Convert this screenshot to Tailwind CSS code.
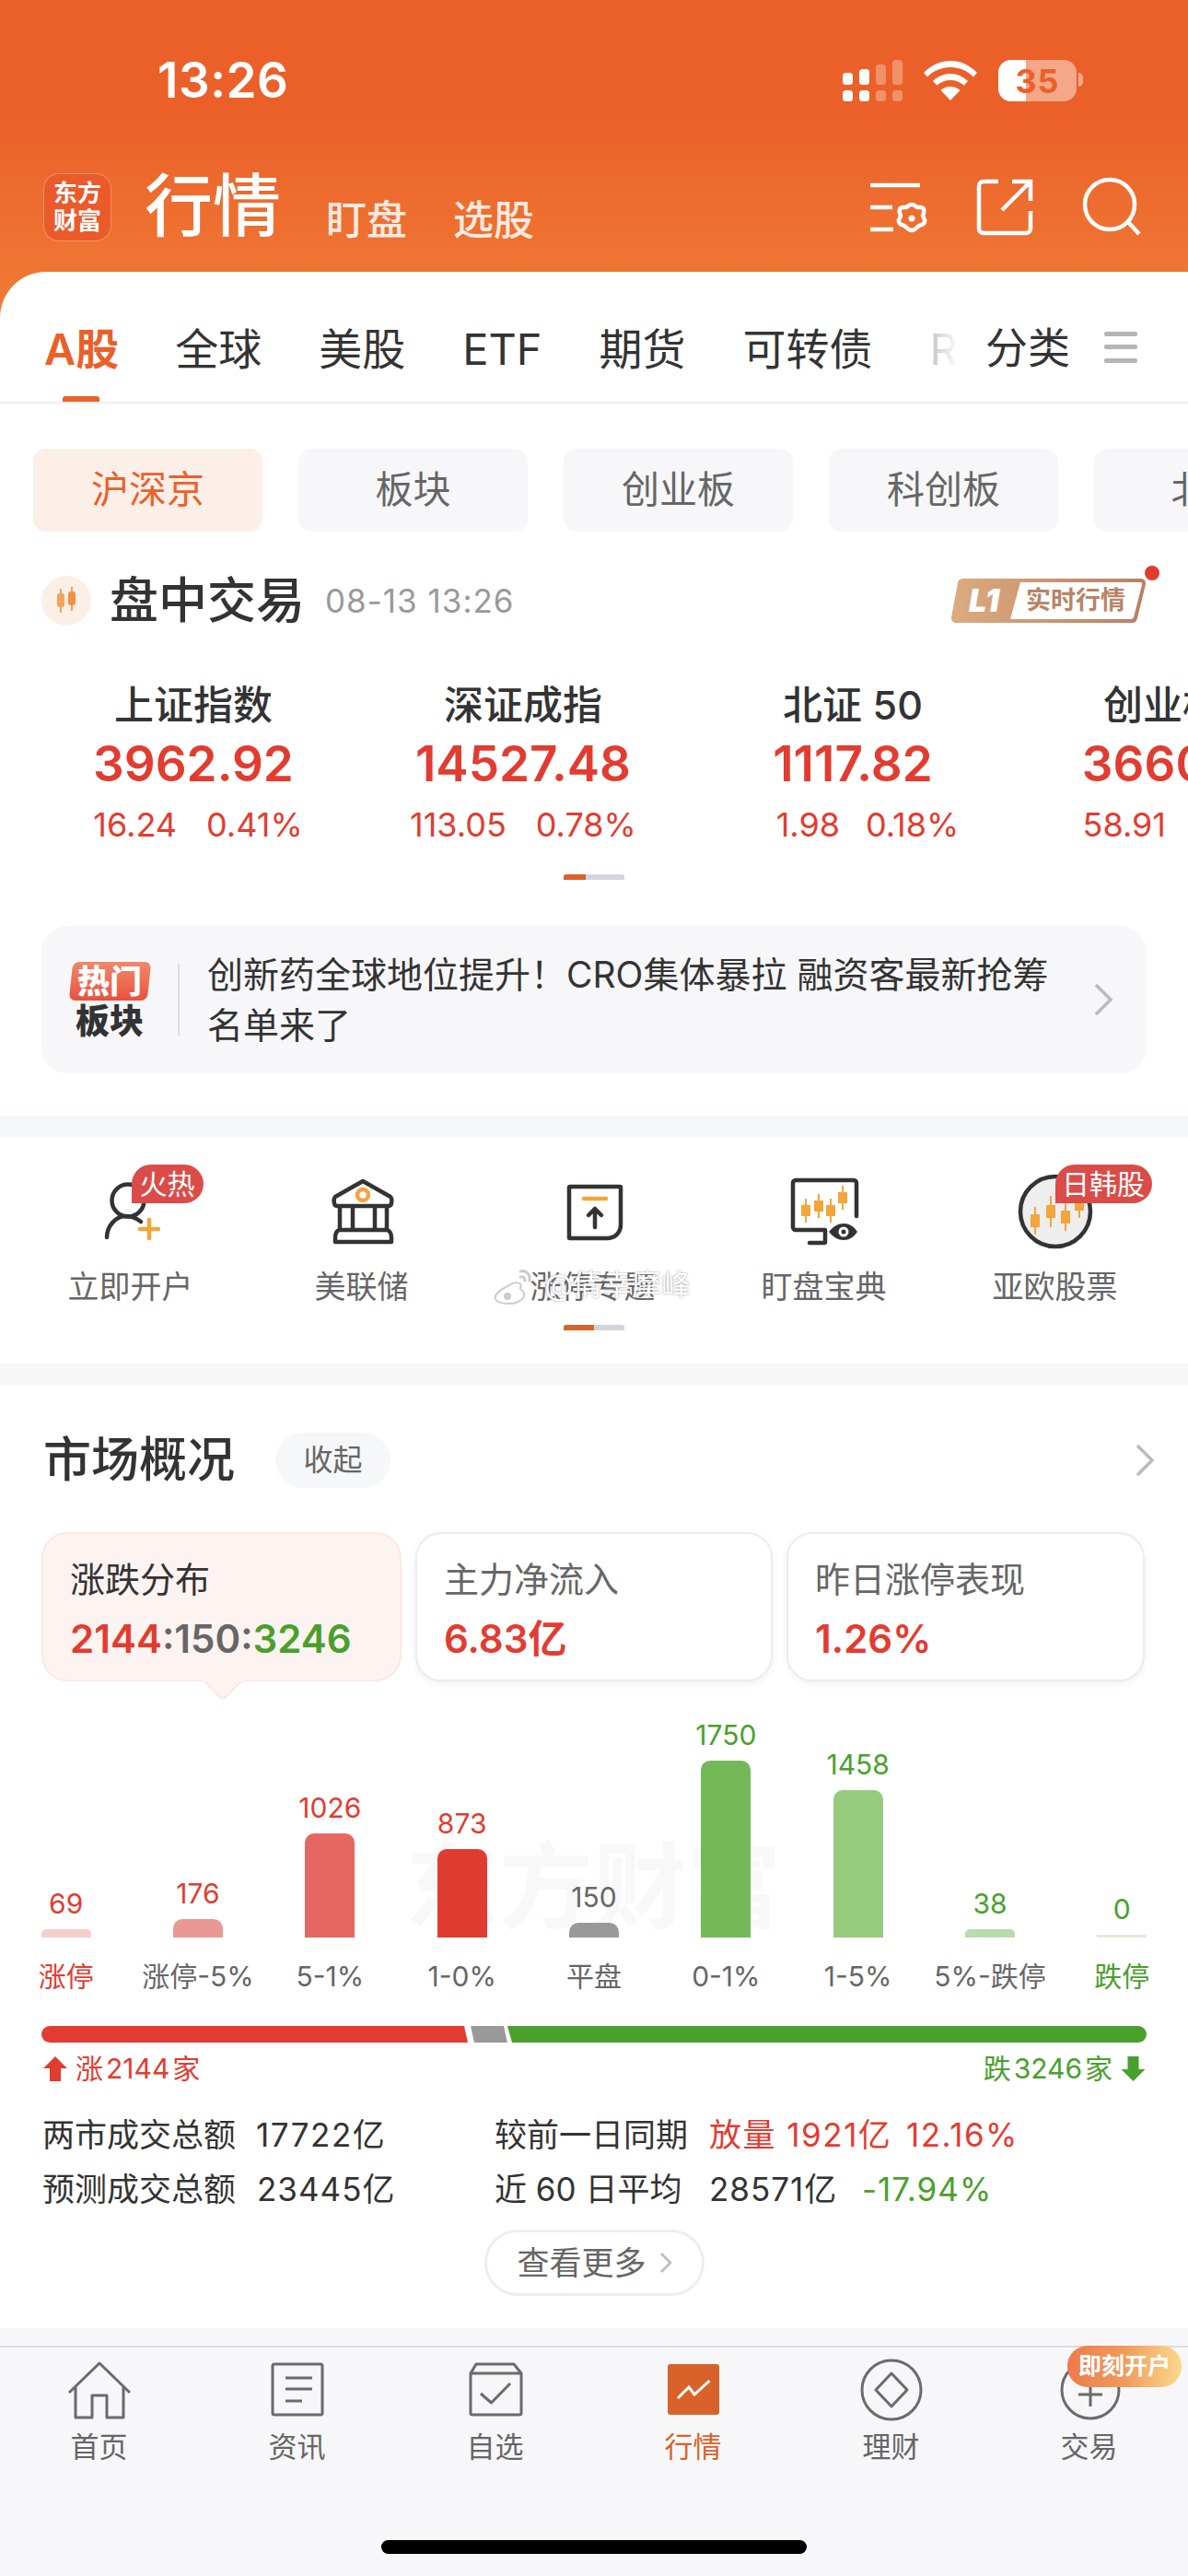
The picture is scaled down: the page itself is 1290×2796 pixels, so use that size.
<!DOCTYPE html>
<html lang="zh">
<head>
<meta charset="utf-8">
<title>行情</title>
<script src="https://cdn.jsdelivr.net/npm/@tailwindcss/browser@4"></script>
</head>
<body>
<div class="w-[1290px] h-[2796px] overflow-hidden flex flex-col bg-[#f6f7f9] text-[#333] font-['Inter','Noto_Sans_CJK_SC',sans-serif]">

  <!-- orange header -->
  <div class="h-[350px] shrink-0 bg-linear-to-b from-[#eb6029] from-[35%] to-[#f07c36] text-white">
    <div class="h-[175px] flex items-center relative">
      <span class="ml-[171px] text-[53px] font-semibold leading-none tracking-[0.5px]">13:26</span>
      <div class="ml-auto mr-[121px] flex items-center gap-[23px]">
        <svg width="65" height="45" viewBox="0 0 65 45" fill="#fff">
          <rect x="0" y="14" width="11" height="13" rx="3.500"/><rect x="18" y="10" width="11" height="17" rx="3.500"/>
          <rect x="36" y="5" width="11" height="22" rx="3.500" opacity=".3"/><rect x="54" y="0" width="11" height="27" rx="3.500" opacity=".3"/>
          <rect x="0" y="33" width="11" height="12" rx="3.500"/><rect x="18" y="33" width="11" height="12" rx="3.500"/>
          <rect x="36" y="33" width="11" height="12" rx="3.500" opacity=".3"/><rect x="54" y="33" width="11" height="12" rx="3.500" opacity=".3"/>
        </svg>
        <svg width="58" height="43" viewBox="0 0 58 43" fill="#fff">
          <path d="M29 0C18 0 8 4.500 0 13l4 4.500C11 10.500 19.500 7 29 7s18 3.500 25 10.500l4-4.500C50 4.500 40 0 29 0z"/>
          <path d="M29 14c-7 0-13.500 2.800-19 8l4.300 4.800C18.500 23 23.500 21 29 21s10.500 2 14.700 5.800L48 22c-5.500-5.200-12-8-19-8z"/>
          <path d="M29 28c-4 0-7.500 1.400-10.500 4L29 43l10.500-11c-3-2.600-6.500-4-10.500-4z"/>
        </svg>
        <div class="relative w-[85px] h-[45px] rounded-[14px] overflow-hidden flex bg-white/45">
          <div class="w-[30px] bg-white"></div>
          <span class="absolute inset-0 flex items-center justify-center text-[36px] leading-none font-bold text-[#eb6029] tracking-[1px]">35</span>
        </div>
      </div>
      <div class="absolute left-[1171px] top-[79px] w-[5px] h-[15px] rounded-r-full bg-white/45"></div>
    </div>
    <div class="flex items-start h-[120px]">
      <div class="ml-[48px] mt-[14px] w-[72px] h-[72px] rounded-[16px] bg-[#eb5a2a] shadow-[0_0_0_1px_rgba(255,255,255,0.25)] flex flex-col items-center justify-center text-[26px] leading-[30px] font-bold">
        <span>东方</span><span>财富</span>
      </div>
      <span class="ml-[37px] mt-[11px] text-[74px] leading-[74px] font-medium">行情</span>
      <span class="ml-[49px] mt-[42px] text-[44px] leading-[44px] font-medium text-white/85">盯盘</span>
      <span class="ml-[50px] mt-[42px] text-[44px] leading-[44px] font-medium text-white/85">选股</span>
      <svg class="ml-auto mr-[45px] mt-[15px]" width="300" height="70" viewBox="945 190 300 70" fill="none" stroke="#fff" stroke-width="4.500">
        <path d="M945 201h54M945 225h24M945 249h25"/>
        <path d="M990 222c3 0 4 2 6 3 3 0 6-1 7 2s0 5-1 7c0 2 3 4 2 7s-4 3-6 4c-2 1-4 5-8 5s-6-4-8-5c-2-1-5-1-6-4s2-5 2-7c-1-2-2-4-1-7s4-2 7-2c2-1 3-3 6-3z"/>
        <circle cx="990" cy="237" r="3.500" fill="#fff" stroke="none"/>
        <path d="M1084 197h-16a5 5 0 0 0-5 5v46a5 5 0 0 0 5 5h46a5 5 0 0 0 5-5v-19"/>
        <path d="M1088 228l31-31M1099 197h20v21"/>
        <circle cx="1205" cy="222" r="27"/>
        <path d="M1225 241l12 13"/>
      </svg>
    </div>
  </div>

  <!-- white card with market tabs -->
  <div class="-mt-[55px] relative bg-white rounded-t-[50px] pb-[46px]">
    <div class="relative h-[143px] border-b-2 border-[#eeeeee] overflow-hidden">
      <div class="flex items-center gap-[62px] pl-[48px] h-[166px] text-[47px] leading-none whitespace-nowrap">
        <span class="text-[#eb6029] font-semibold -mr-[1px]">A股</span>
        <span>全球</span><span>美股</span><span>ETF</span><span>期货</span><span>可转债</span><span class="text-[#ccc]">REITs</span>
      </div>
      <div class="absolute left-[68px] bottom-0 w-[40px] h-[6px] rounded-t-[3px] bg-[#eb6029]"></div>
      <div class="absolute right-0 top-0 h-full w-[276px] flex items-center pt-[22px] bg-linear-to-r from-white/0 from-[0%] via-white via-[10%] to-white">
        <span class="ml-[56px] text-[46px] leading-none">分类</span>
        <svg class="ml-[37px]" width="36" height="36" viewBox="0 0 36 36" fill="#b5b5b5"><rect y="1" width="36" height="5" rx="2"/><rect y="15" width="36" height="5" rx="2"/><rect y="30" width="36" height="5" rx="2"/></svg>
      </div>
    </div>

    <div class="flex gap-[39px] pl-[36px] pt-[49px] whitespace-nowrap">
      <div class="w-[249px] h-[90px] shrink-0 rounded-[14px] bg-[#fbefe8] text-[#eb6029] text-[41px] flex items-center justify-center">沪深京</div>
      <div class="w-[249px] h-[90px] shrink-0 rounded-[14px] bg-[#f7f7f9] text-[#666] text-[41px] flex items-center justify-center">板块</div>
      <div class="w-[249px] h-[90px] shrink-0 rounded-[14px] bg-[#f7f7f9] text-[#666] text-[41px] flex items-center justify-center">创业板</div>
      <div class="w-[249px] h-[90px] shrink-0 rounded-[14px] bg-[#f7f7f9] text-[#666] text-[41px] flex items-center justify-center">科创板</div>
      <div class="w-[249px] h-[90px] shrink-0 rounded-[14px] bg-[#f7f7f9] text-[#666] text-[41px] flex items-center justify-center">北证</div>
    </div>

    <div class="flex items-center pl-[45px] pr-[45px] mt-[48px] h-[54px]">
      <svg width="54" height="54" viewBox="0 0 54 54">
        <circle cx="27" cy="27" r="27" fill="#fcefe6"/>
        <path d="M21 14v26M33 12v26" stroke="#f3a35c" stroke-width="2"/>
        <rect x="17" y="19" width="8" height="15" rx="3" fill="#f3a35c"/><rect x="29" y="17" width="8" height="15" rx="3" fill="#ef9245"/>
      </svg>
      <span class="ml-[20px] text-[53px] leading-none font-medium">盘中交易</span>
      <span class="ml-[22px] text-[35px] leading-none tracking-[1px] text-[#999]">08-13 13:26</span>
      <div class="ml-auto relative w-[213px] h-[48px]">
        <svg class="absolute inset-0" width="213" height="48" viewBox="0 0 213 48">
          <defs><linearGradient id="lg" x1="0" x2="1"><stop offset="0" stop-color="#dcab7f"/><stop offset="1" stop-color="#b87f66"/></linearGradient></defs>
          <path d="M13 0H207a5 5 0 0 1 5 6l-9 37a6 6 0 0 1-6 5H6a5 5 0 0 1-5-6L8 5a6 6 0 0 1 5-5z" fill="url(#lg)"/>
          <path d="M76 4H206a2 2 0 0 1 2 3l-9 35a3 3 0 0 1-3 2H65z" fill="#fff"/>
        </svg>
        <span class="absolute left-[20px] top-[4px] text-[34px] leading-[40px] font-black italic text-white">L1</span>
        <span class="absolute left-[82px] top-[8px] text-[27px] leading-[32px] font-bold text-[#b88368] whitespace-nowrap">实时行情</span>
        <div class="absolute -top-[14px] -right-[14px] w-[16px] h-[16px] rounded-full bg-[#e23c31]"></div>
      </div>
    </div>

    <div class="flex pl-[31px] pt-[61px] overflow-hidden whitespace-nowrap text-center">
      <div class="w-[358px] shrink-0 flex flex-col items-center">
        <span class="text-[43px] leading-[50px] font-medium">上证指数</span>
        <span class="mt-[7px] text-[53px] leading-[64px] font-semibold text-[#e23c31]">3962.92</span>
        <div class="mt-[12px] ml-[10px] flex gap-[32px] text-[36px] leading-[44px] text-[#e23c31]"><span>16.24</span><span>0.41%</span></div>
      </div>
      <div class="w-[358px] shrink-0 flex flex-col items-center">
        <span class="text-[43px] leading-[50px] font-medium">深证成指</span>
        <span class="mt-[7px] text-[53px] leading-[64px] font-semibold text-[#e23c31]">14527.48</span>
        <div class="mt-[12px] flex gap-[32px] text-[36px] leading-[44px] text-[#e23c31]"><span>113.05</span><span>0.78%</span></div>
      </div>
      <div class="w-[358px] shrink-0 flex flex-col items-center">
        <span class="text-[43px] leading-[50px] font-medium">北证 50</span>
        <span class="mt-[7px] text-[53px] leading-[64px] font-semibold text-[#e23c31]">1117.82</span>
        <div class="mt-[12px] ml-[32px] flex gap-[28px] text-[36px] leading-[44px] text-[#e23c31]"><span>1.98</span><span>0.18%</span></div>
      </div>
      <div class="w-[358px] shrink-0 flex flex-col items-center">
        <span class="text-[43px] leading-[50px] font-medium">创业板指</span>
        <span class="mt-[7px] text-[53px] leading-[64px] font-semibold text-[#e23c31]">3660.92</span>
        <div class="mt-[12px] ml-[10px] flex gap-[32px] text-[36px] leading-[44px] text-[#e23c31]"><span>58.91</span><span>1.60%</span></div>
      </div>
    </div>
    <div class="mt-[32px] mx-auto w-[66px] h-[6px] rounded-t-[3px] bg-[#d1d5db] overflow-hidden"><div class="w-[24px] h-full bg-[#d9622a]"></div></div>

    <div class="mt-[50px] mx-[45px] h-[160px] rounded-[28px] bg-[#f7f7fa] flex items-center">
      <div class="ml-[31px] w-[86px] flex flex-col items-center">
        <div class="w-[85px] h-[42px] rounded-[7px] -skew-x-6 bg-linear-to-b from-[#f0886a] to-[#e9503f] flex items-center justify-center">
          <span class="skew-x-6 text-white text-[35px] leading-none font-black">热门</span>
        </div>
        <span class="mt-[5px] text-[37px] leading-[36px] font-black text-[#333] whitespace-nowrap">板块</span>
      </div>
      <div class="ml-[31px] w-[2px] h-[78px] bg-[#dddddd]"></div>
      <div class="ml-[30px] text-[39px] leading-[55px] whitespace-nowrap">创新药全球地位提升！CRO集体暴拉 融资客最新抢筹<br>名单来了</div>
      <svg class="ml-auto mr-[36px]" width="22" height="38" viewBox="0 0 22 38" fill="none" stroke="#bbb" stroke-width="3.500"><path d="M3 3l16 16L3 35"/></svg>
    </div>
  </div>

  <!-- shortcuts -->
  <div class="mt-[23px] h-[246px] bg-white">
    <div class="grid grid-cols-5 w-[1255px] ml-[16px] pt-[36px] text-center text-[34px] leading-[44px] text-[#666] whitespace-nowrap">
      <div class="flex flex-col items-center">
        <div class="relative w-[90px] h-[90px]">
          <svg width="90" height="90" viewBox="0 0 90 90" fill="none" stroke="#333" stroke-width="4.500" stroke-linecap="round">
            <circle cx="42" cy="33" r="17.500"/><path d="M19 73c0-12 10-24 22-23 6 0 11 3 15 6"/>
            <path d="M55 64h20M65 54v20" stroke="#f3a53c"/>
          </svg>
          <div class="absolute left-[46px] -top-[6px] w-[78px] h-[42px] rounded-r-full rounded-tl-full bg-[#db4c48] text-white text-[30px] leading-[42px]">火热</div>
        </div>
        <span class="mt-[15px]">立即开户</span>
      </div>
      <div class="flex flex-col items-center">
        <svg width="90" height="90" viewBox="0 0 90 90" fill="none" stroke="#333" stroke-width="4.500" stroke-linejoin="round">
          <path d="M46 12L16 29c-2 2-2 10 2 10h56c4 0 4-8 2-10z"/>
          <path d="M21 40v25M35 40v25M59 40v25M72 40v25"/>
          <path d="M21 65h50c4 0 6 4 6 8v5H16v-5c0-4 2-8 5-8z"/>
          <circle cx="46" cy="27" r="6" stroke="#f3a53c"/>
        </svg>
        <span class="mt-[15px]">美联储</span>
      </div>
      <div class="flex flex-col items-center relative">
        <svg width="90" height="90" viewBox="0 0 90 90" fill="none" stroke="#333" stroke-width="4.500" stroke-linejoin="round" stroke-linecap="round">
          <path d="M20 18h54a1 1 0 0 1 1 1v40c0 9-6 15-15 15H20a1 1 0 0 1-1-1V19a1 1 0 0 1 1-1z"/>
          <path d="M35 31h24" stroke="#f3a53c"/>
          <path d="M47 62V42M40 49l7-7 7 7"/>
        </svg>
        <span class="mt-[15px]">涨停专题</span>
        <div class="absolute left-[17px] top-[103px] flex items-center text-white text-[32px] leading-[44px] [text-shadow:0_0_2px_#888]">
          <svg width="44" height="42" viewBox="0 0 44 42"><path d="M30 6c6-2 11 3 10 10M30 12c3-1 5 1 5 4" fill="none" stroke="#ccc" stroke-width="3" stroke-linecap="round"/><path d="M30 24c4-8-8-6-12-3C10 25 1 30 3 36c2 5 10 5 15 5 10 0 18-6 16-12-1-3-6-4-4-5z" fill="#fff" stroke="#ccc" stroke-width="2"/><circle cx="16" cy="33" r="4" fill="#ccc"/></svg>
          <span class="ml-[12px]">@倩幸摩峰</span>
        </div>
      </div>
      <div class="flex flex-col items-center">
        <svg width="90" height="90" viewBox="0 0 90 90" fill="none">
          <path d="M80 50V14a3 3 0 0 0-3-3H14a3 3 0 0 0-3 3v48a3 3 0 0 0 3 3h32v13a1 1 0 0 1-1 1H29" stroke="#333" stroke-width="4.500" stroke-linejoin="round" stroke-linecap="round"/>
          <g fill="#f3a53c"><path d="M24 31h2v7h4v12h-4v7h-2v-7h-4V38h4z"/><path d="M38 26h2v7h4v12h-4v7h-2v-7h-4V33h4z"/><path d="M51 31h2v7h4v12h-4v7h-2v-7h-4V38h4z"/><path d="M64 17h2v7h4v12h-4v7h-2v-7h-4V24h4z"/></g>
          <path d="M50 67c5-6 10-9 16-9s11 3 15 9c-4 6-9 9-15 9s-11-3-16-9z" fill="#333"/>
          <circle cx="66" cy="67" r="5.500" fill="#fff"/><circle cx="66" cy="67" r="2.500" fill="#333"/>
        </svg>
        <span class="mt-[15px]">盯盘宝典</span>
      </div>
      <div class="flex flex-col items-center">
        <div class="relative w-[90px] h-[90px]">
          <svg width="90" height="90" viewBox="0 0 90 90" fill="none">
            <circle cx="45" cy="45" r="38" fill="#eeeeee" stroke="#333" stroke-width="4.500"/>
            <g fill="#f3a53c"><path d="M22 40h2v8h4v14h-4v8h-2v-8h-4V48h4z"/><path d="M39 28h2v10h4v14h-4v10h-2V52h-4V38h4z"/><path d="M55 34h2v10h4v14h-4v8h-2v-8h-4V44h4z"/><path d="M70 22h2v8h4v14h-4v8h-2v-8h-4V30h4z"/></g>
          </svg>
          <div class="absolute left-[45px] -top-[6px] w-[105px] h-[42px] rounded-r-full rounded-tl-full bg-[#db4c48] text-white text-[30px] leading-[42px]">日韩股</div>
        </div>
        <span class="mt-[15px]">亚欧股票</span>
      </div>
    </div>
    <div class="mt-[19px] mx-auto w-[66px] h-[6px] rounded-t-[3px] bg-[#d1d5db] overflow-hidden"><div class="w-[33px] h-full bg-[#d9622a]"></div></div>
  </div>

  <!-- market overview -->
  <div class="mt-[23px] h-[1024px] bg-white">
    <div class="flex items-center pl-[47px] pr-[36px] pt-[52px]">
      <span class="text-[52px] leading-[60px] font-medium">市场概况</span>
      <span class="ml-[44px] w-[125px] h-[60px] rounded-full bg-[#f6f7f9] text-[#666] text-[32px] flex items-center justify-center">收起</span>
      <svg class="ml-auto" width="22" height="38" viewBox="0 0 22 38" fill="none" stroke="#bbb" stroke-width="3.500"><path d="M3 3l16 16L3 35"/></svg>
    </div>

    <div class="grid grid-cols-[391px_388px_389px] gap-[15px] pl-[45px] mt-[48px] relative">
      <div class="relative h-[162px] rounded-[28px] bg-[#fdf4f1] border-2 border-[#fce9e0] pl-[29px] pt-[25px]">
        <div class="text-[38px] leading-[48px]">涨跌分布</div>
        <div class="mt-[16px] text-[42px] leading-[50px] font-semibold text-[#666]"><span class="text-[#e23c31]">2144</span>:150:<span class="text-[#49a02c]">3246</span></div>
        <svg class="absolute left-[173px] top-[158px]" width="44" height="22" viewBox="0 0 44 22"><path d="M0 0h44L25 19c-2 2-4 2-6 0z" fill="#fdf4f1" stroke="#fce9e0" stroke-width="2"/><path d="M0 0h44v2H0z" fill="#fdf4f1"/></svg>
      </div>
      <div class="h-[162px] rounded-[28px] bg-white border-2 border-[#ececec] shadow-[0_3px_8px_rgba(0,0,0,0.06)] pl-[29px] pt-[25px]">
        <div class="text-[38px] leading-[48px] text-[#666]">主力净流入</div>
        <div class="mt-[16px] text-[42px] leading-[50px] font-semibold text-[#e23c31]">6.83亿</div>
      </div>
      <div class="h-[162px] rounded-[28px] bg-white border-2 border-[#ececec] shadow-[0_3px_8px_rgba(0,0,0,0.06)] pl-[29px] pt-[25px]">
        <div class="text-[38px] leading-[48px] text-[#666]">昨日涨停表现</div>
        <div class="mt-[16px] text-[42px] leading-[50px] font-semibold text-[#e23c31]">1.26%</div>
      </div>
    </div>

    <div class="relative h-[278px]">
      <div class="absolute left-[440px] top-[168px] text-[102px] leading-[110px] font-bold text-[#f8f8f8] whitespace-nowrap">东方财富</div>
      <div class="relative h-full grid grid-cols-9 items-end text-center text-[30px] leading-[36px]">
        <div class="flex flex-col items-center text-[#e23c31]"><span class="mb-[10px]">69</span><div class="w-[54px] h-[9px] rounded-t-[5px] bg-[#f6cfcd]"></div></div>
        <div class="flex flex-col items-center text-[#e23c31]"><span class="mb-[10px]">176</span><div class="w-[54px] h-[20px] rounded-t-[10px] bg-[#ea9893]"></div></div>
        <div class="flex flex-col items-center text-[#e23c31]"><span class="mb-[10px]">1026</span><div class="w-[54px] h-[113px] rounded-t-[10px] bg-[#e56761]"></div></div>
        <div class="flex flex-col items-center text-[#e23c31]"><span class="mb-[10px]">873</span><div class="w-[54px] h-[96px] rounded-t-[10px] bg-[#e03b31]"></div></div>
        <div class="flex flex-col items-center text-[#666]"><span class="mb-[10px]">150</span><div class="w-[54px] h-[16px] rounded-t-[10px] bg-[#999999]"></div></div>
        <div class="flex flex-col items-center text-[#49a02c]"><span class="mb-[10px]">1750</span><div class="w-[54px] h-[192px] rounded-t-[10px] bg-[#74b957]"></div></div>
        <div class="flex flex-col items-center text-[#49a02c]"><span class="mb-[10px]">1458</span><div class="w-[54px] h-[160px] rounded-t-[10px] bg-[#96cb7e]"></div></div>
        <div class="flex flex-col items-center text-[#49a02c]"><span class="mb-[10px]">38</span><div class="w-[54px] h-[9px] rounded-t-[5px] bg-[#b9dcaa]"></div></div>
        <div class="flex flex-col items-center text-[#49a02c]"><span class="mb-[10px]">0</span><div class="w-[54px] h-[3px] bg-[#dcedd4]"></div></div>
      </div>
    </div>
    <div class="grid grid-cols-9 mt-[22px] text-center text-[30px] leading-[40px] text-[#666] whitespace-nowrap">
      <span class="text-[#e23c31]">涨停</span><span>涨停-5%</span><span>5-1%</span><span>1-0%</span><span>平盘</span><span>0-1%</span><span>1-5%</span><span>5%-跌停</span><span class="text-[#49a02c]">跌停</span>
    </div>

    <svg class="block ml-[45px] mt-[34px]" width="1200" height="18" viewBox="0 0 1200 18">
      <path d="M9 0H459l4 18H9a9 9 0 0 1 0-18z" fill="#e23c31"/>
      <path d="M466 0h36l4 18h-36z" fill="#999"/>
      <path d="M506 0h685a9 9 0 0 1 0 18H511z" fill="#49a02c"/>
    </svg>
    <div class="flex items-center pl-[47px] pr-[46px] mt-[13px] h-[30px] text-[30px] leading-none whitespace-nowrap">
      <svg width="26" height="27" viewBox="0 0 26 27" fill="#e23c31"><path d="M13 0l13 13h-7v14H7V13H0z"/></svg>
      <span class="ml-[9px] text-[#e23c31] flex gap-[3px]"><span>涨</span><span>2144</span><span>家</span></span>
      <span class="ml-auto text-[#49a02c] flex gap-[3px]"><span>跌</span><span>3246</span><span>家</span></span>
      <svg class="ml-[9px]" width="27" height="27" viewBox="0 0 26 27" fill="#49a02c"><path d="M13 27L0 14h7V0h12v14h7z"/></svg>
    </div>

    <div class="flex pl-[46px] mt-[35px] text-[35px] leading-[44px] whitespace-nowrap">
      <span class="w-[232px]">两市成交总额</span><span class="w-[259px] tracking-[1.5px]">17722亿</span>
      <span class="w-[233px]">较前一日同期</span><span class="w-[214px] text-[#e23c31] tracking-[1.5px]">放量 1921亿</span><span class="text-[#e23c31] tracking-[1.5px]">12.16%</span>
    </div>
    <div class="flex pl-[46px] mt-[15px] text-[35px] leading-[44px] whitespace-nowrap">
      <span class="w-[233px]">预测成交总额</span><span class="w-[258px] tracking-[1px]">23445亿</span>
      <span class="w-[233px]">近 60 日平均</span><span class="w-[166px] tracking-[1px]">28571亿</span><span class="text-[#49a02c] tracking-[1px]">-17.94%</span>
    </div>
    <div class="mt-[22px] ml-[526px] w-[239px] h-[72px] rounded-full border-[3px] border-[#eeeeee] flex items-center justify-center text-[35px] text-[#666] whitespace-nowrap">
      查看更多
      <svg class="ml-[14px]" width="14" height="24" viewBox="0 0 14 24" fill="none" stroke="#bbb" stroke-width="2.500"><path d="M2 2l10 10L2 22"/></svg>
    </div>
  </div>

  <!-- bottom tab bar -->
  <div class="flex-1 bg-[#f7f7fa] flex flex-col pt-[19px]">
    <div class="relative border-t-2 border-[#dddddd] grid grid-cols-6 pt-[11px] text-center text-[31px] leading-[44px] text-[#666]">
      <div class="flex flex-col items-center">
        <svg width="72" height="72" viewBox="0 0 72 72" fill="none" stroke="#6b6b6b" stroke-width="3" stroke-linejoin="round"><path d="M3 38L36 6l33 32M10 31v34h18V41h16v24h18V31"/></svg>
        <span class="mt-[3px]">首页</span>
      </div>
      <div class="flex flex-col items-center">
        <svg width="72" height="72" viewBox="0 0 72 72" fill="none" stroke="#6b6b6b" stroke-width="3" stroke-linejoin="round"><rect x="9" y="7" width="54" height="55" rx="2"/><path d="M23 22h29M23 34h29M23 47h18"/></svg>
        <span class="mt-[3px]">资讯</span>
      </div>
      <div class="flex flex-col items-center">
        <svg width="72" height="72" viewBox="0 0 72 72" fill="none" stroke="#6b6b6b" stroke-width="3" stroke-linejoin="round"><path d="M15 7h41l8 10v43a2 2 0 0 1-2 2H11a2 2 0 0 1-2-2V17zM9 17h55M20 39l11.500 10L52 28"/></svg>
        <span class="mt-[3px]">自选</span>
      </div>
      <div class="flex flex-col items-center text-[#d9622a]">
        <svg width="72" height="72" viewBox="0 0 72 72" fill="none"><rect x="8" y="7" width="56" height="55" rx="3" fill="#d9622a"/><path d="M19 44l12-12 6 8 16.500-15" stroke="#fff" stroke-width="3"/></svg>
        <span class="mt-[3px]">行情</span>
      </div>
      <div class="flex flex-col items-center">
        <svg width="72" height="72" viewBox="0 0 72 72" fill="none" stroke="#6b6b6b" stroke-width="3" stroke-linejoin="round"><circle cx="36" cy="35" r="32"/><path d="M36 17l17 18-17 18-17-18z"/></svg>
        <span class="mt-[3px]">理财</span>
      </div>
      <div class="flex flex-col items-center">
        <svg width="72" height="72" viewBox="0 0 72 72" fill="none" stroke="#6b6b6b" stroke-width="3"><circle cx="37" cy="35" r="31"/><path d="M24 40h26M37 27v26"/></svg>
        <span class="mt-[3px]">交易</span>
      </div>
      <div class="absolute left-[1159px] -top-[2px] w-[124px] h-[45px] rounded-[22px] bg-linear-to-r from-[#ef7a4c] via-[#f09a5c] to-[#fbd98c] text-white text-[25px] leading-[45px] font-bold whitespace-nowrap">即刻开户</div>
    </div>
    <div class="mt-auto mb-[24px] mx-auto w-[462px] h-[15px] rounded-full bg-black"></div>
  </div>
</div>
</body>
</html>
